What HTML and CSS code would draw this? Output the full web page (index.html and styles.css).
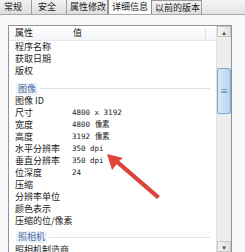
FILE: index.html
```html
<!DOCTYPE html>
<html lang="zh-CN">

<head>
   <meta charset="UTF-8">
   <title>详细信息</title>
   <link rel="stylesheet" href="styles.css">
</head>

<body>
   <!-- 标签栏 -->
   <div class="tabs">
      <div class="tab tab-first">常规</div>
      <div class="tab tab-safe">安全</div>
      <div class="tab tab-mod">属性修改</div>
      <div class="tab active">详细信息</div>
      <div class="tab tab-prev">以前的版本</div>
   </div>

   <div class="panel">
      <div class="listbox">
         <div class="list">
            <!-- 表头 -->
            <div class="header">
               <span class="col-name">属性</span>
               <span class="col-head">值</span>
               <span class="header-sep"></span>
            </div>

            <div class="row"><span class="col-name">程序名称</span></div>
            <div class="row"><span class="col-name">获取日期</span></div>
            <div class="row"><span class="col-name">版权</span></div>

            <div class="group"><span class="group-title">图像</span><span class="group-line"></span></div>

            <div class="row"><span class="col-name">图像 ID</span></div>
            <div class="row"><span class="col-name">尺寸</span><span class="col-value">4800 x 3192</span></div>
            <div class="row"><span class="col-name">宽度</span><span class="col-value">4800 像素</span></div>
            <div class="row"><span class="col-name">高度</span><span class="col-value">3192 像素</span></div>
            <div class="row"><span class="col-name">水平分辨率</span><span class="col-value">350 dpi</span></div>
            <div class="row"><span class="col-name">垂直分辨率</span><span class="col-value">350 dpi</span></div>
            <div class="row"><span class="col-name">位深度</span><span class="col-value">24</span></div>
            <div class="row"><span class="col-name">压缩</span></div>
            <div class="row"><span class="col-name">分辨率单位</span></div>
            <div class="row"><span class="col-name">颜色表示</span></div>
            <div class="row"><span class="col-name">压缩的位/像素</span></div>

            <div class="group group-cam"><span class="group-title">照相机</span><span class="group-line"></span></div>

            <div class="row"><span class="col-name">照相机制造商</span></div>
         </div>

         <!-- 滚动条 -->
         <div class="scrollbar">
            <div class="sb-btn">&#9652;</div>
            <div class="sb-track">
               <div class="sb-thumb">&#8801;</div>
            </div>
            <div class="sb-btn">&#9662;</div>
         </div>
      </div>

      <!-- 红色箭头 -->
      <svg class="arrow" width="245" height="252" viewBox="0 0 245 252">
         <path d="M160 196 L117 159 L114 162 L157 199 Z" fill="#dc443b" />
         <polygon points="107,154 123,158 119,161 116,165 112,170" fill="#e0453c" />
      </svg>
   </div>
</body>

</html>
```

FILE: styles.css
```css
/* 页面整体 */
body {
   margin: 0;
   width: 245px;
   height: 252px;
   overflow: hidden;
   background: #f9f9f9;
   font-family: "Noto Sans CJK SC", "DejaVu Sans", sans-serif;
   font-size: 9px;
   color: #1a1a1a;
   position: relative;
}

/* 标签栏 */
.tabs {
   display: flex;
   height: 15px;
   background: linear-gradient(#f4f4f4, #e4e4e4);
   border-bottom: 1px solid #a8a8a8;
   box-sizing: border-box;
}

.tab {
   height: 14px;
   line-height: 14px;
   border-right: 1px solid #9c9c9c;
   background: linear-gradient(#f2f2f2, #dedede);
   color: #222;
   white-space: nowrap;
   box-sizing: border-box;
}

.tab-first {
   width: 32px;
   padding-left: 4px;
}

.tab-safe {
   width: 35px;
   padding-left: 6px;
}

.tab-mod {
   width: 41px;
   padding-left: 3px;
}

.tab.active {
   background: #fcfcfc;
   border: 1px solid #8f8f8f;
   border-bottom: none;
   height: 15px;
   margin-top: -1px;
   width: 44px;
   padding-left: 3px;
}

.tab-prev {
   width: 50px;
   padding-left: 3px;
   border-top: 1px solid #9c9c9c;
}

/* 面板 */
.panel {
   padding: 10px 0 0 8px;
}

.listbox {
   display: flex;
   width: 224px;
   height: 227px;
   border: 1px solid #8e949c;
   border-bottom: none;
   background: #fff;
   box-sizing: border-box;
}

.list {
   flex: 1;
   overflow: hidden;
}

/* 表头 */
.header {
   display: flex;
   align-items: center;
   height: 14px;
   line-height: 14px;
   position: relative;
   background: linear-gradient(#fff, #f4f5f7);
   border-bottom: 1px solid #e4e6e9;
}

.header-sep {
   position: absolute;
   left: 196px;
   top: 2px;
   width: 1px;
   height: 11px;
   background: #dcdfe3;
}

.col-name {
   width: 57px;
   padding-left: 6px;
   white-space: nowrap;
}

.col-head {
   padding-left: 1px;
}

.col-value {
   font-family: "DejaVu Sans Mono", monospace;
   font-size: 7.5px;
   color: #222;
   white-space: nowrap;
}

.row {
   display: flex;
   align-items: center;
   height: 12px;
   line-height: 12px;
}

/* 分组 */
.group {
   display: flex;
   align-items: center;
   height: 18px;
   padding: 5px 6px 0 7px;
   box-sizing: border-box;
}

.group-cam {
   height: 17px;
   padding-top: 3px;
}

.group-title {
   flex-shrink: 0;
   white-space: nowrap;
   color: #4a66a0;
   background: #eef3fb;
   padding: 0 2px;
   line-height: 12px;
}

.group-line {
   flex: 1;
   height: 1px;
   margin-left: 2px;
   background: #dfe4ec;
}

/* 滚动条 */
.scrollbar {
   width: 14px;
   display: flex;
   flex-direction: column;
   background: #eeeeee;
   border-left: 1px solid #e2e2e2;
}

.sb-btn {
   height: 11px;
   font-size: 7px;
   line-height: 10px;
   text-align: center;
   color: #4d4d4d;
   background: linear-gradient(90deg, #f3f3f3, #e3e3e3);
   border: 1px solid #c6c6c6;
   box-sizing: border-box;
}

.sb-track {
   flex: 1;
   padding-top: 31px;
}

.sb-thumb {
   height: 46px;
   background: linear-gradient(90deg, #d8eaf8, #b5d5f0);
   border: 1px solid #7ea6cc;
   border-radius: 2px;
   box-sizing: border-box;
   font-size: 8px;
   line-height: 44px;
   text-align: center;
   color: #4d6f95;
}

/* 箭头覆盖层 */
.arrow {
   position: absolute;
   left: 0;
   top: 0;
}
```
